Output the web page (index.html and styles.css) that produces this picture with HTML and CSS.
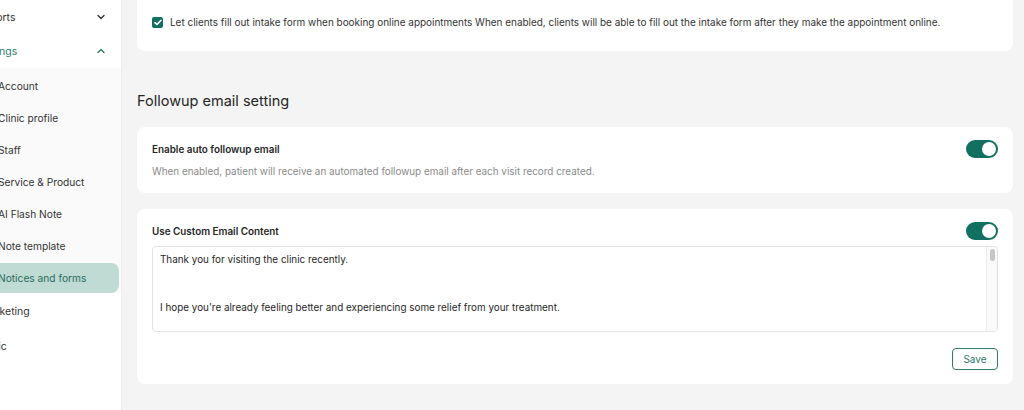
FILE: index.html
```html
<!DOCTYPE html>
<html lang="en">
<head>
    <meta charset="UTF-8">
    <meta name="viewport" content="width=device-width, initial-scale=1.0">
    <title>Notices and forms</title>
    <link rel="stylesheet" href="styles.css">
</head>
<body>
    <aside class="sidebar">
        <nav class="nav">
            <div class="nav-top">
                <span>Reports</span>
                <svg class="chev" width="8" height="6" viewBox="0 0 8 6"><path d="M1 1.5 L4 4.5 L7 1.5" fill="none" stroke="#333" stroke-width="1.4" stroke-linecap="round" stroke-linejoin="round"/></svg>
            </div>
            <div class="nav-top open">
                <span>Settings</span>
                <svg class="chev" width="8" height="6" viewBox="0 0 8 6"><path d="M1 4.5 L4 1.5 L7 4.5" fill="none" stroke="#2f7a69" stroke-width="1.4" stroke-linecap="round" stroke-linejoin="round"/></svg>
            </div>
            <div class="submenu">
                <div class="nav-item">Account</div>
                <div class="nav-item">Clinic profile</div>
                <div class="nav-item">Staff</div>
                <div class="nav-item">Service &amp; Product</div>
                <div class="nav-item">AI Flash Note</div>
                <div class="nav-item">Note template</div>
                <div class="nav-item active">Notices and forms</div>
            </div>
            <div class="nav-top plain"><span>Marketing</span></div>
            <div class="nav-top plain"><span>Basic</span></div>
        </nav>
    </aside>

    <main class="main">
        <section class="card first">
            <label class="check-row">
                <span class="checkbox">
                    <svg width="8" height="7" viewBox="0 0 8 7"><path d="M1 3.6 L3 5.5 L7 1.3" fill="none" stroke="#fff" stroke-width="1.6" stroke-linecap="round" stroke-linejoin="round"/></svg>
                </span>
                <span>Let clients fill out intake form when booking online appointments When enabled, clients will be able to fill out the intake form after they make the appointment online.</span>
            </label>
        </section>

        <h2 class="section-title">Followup email setting</h2>

        <section class="card">
            <div class="row">
                <span class="label">Enable auto followup email</span>
                <span class="toggle"><span class="knob"></span></span>
            </div>
            <p class="hint">When enabled, patient will receive an automated followup email after each visit record created.</p>
        </section>

        <section class="card custom">
            <div class="row">
                <span class="label">Use Custom Email Content</span>
                <span class="toggle"><span class="knob"></span></span>
            </div>
            <div class="textarea">
                <div class="textarea-text">Thank you for visiting the clinic recently.<br><br><br>I hope you're already feeling better and experiencing some relief from your treatment.</div>
                <div class="scrollbar"><span class="thumb"></span></div>
            </div>
            <div class="actions">
                <button class="btn-save">Save</button>
            </div>
        </section>
    </main>
</body>
</html>
```

FILE: styles.css
```css
* {
    box-sizing: border-box;
}
body {
    margin: 0;
    height: 410px;
    overflow: hidden;
    display: flex;
    font-family: Inter, "Noto Sans", sans-serif;
    background-color: #f4f4f4;
    color: #262626;
}
.sidebar {
    width: 122px;
    flex-shrink: 0;
    background: #fff;
    border-right: 1px solid #ededed;
    overflow: hidden;
}
.nav {
    margin-left: -23px;
    width: 145px;
}
.nav-top {
    height: 34px;
    display: flex;
    align-items: center;
    justify-content: space-between;
    padding-right: 17px;
    font-size: 10.5px;
    color: #333;
}
.nav-top.open {
    color: #2f7a69;
}
.nav-top.plain {
    padding-left: 3px;
    height: 35px;
}
.chev {
    display: block;
}
.submenu {
    background: #fafafa;
    padding: 2px 0 0 21px;
}
.nav-item {
    height: 32px;
    display: flex;
    align-items: center;
    font-size: 10.2px;
    color: #333;
}
.nav-item.active {
    margin: 1px 3px 1px -10px;
    height: 30px;
    padding-left: 10px;
    background: #bfdbd4;
    border-radius: 0 8px 8px 0;
    color: #2b6c5d;
}
.main {
    flex: 1;
    padding: 0 11px 0 15px;
}
.card {
    background: #fff;
    border-radius: 8px;
    padding: 13px 15px 14px;
    margin-bottom: 16px;
}
.card.first {
    margin-top: -10px;
    padding: 24px 15px 21px;
    margin-bottom: 0;
}
.check-row {
    display: flex;
    align-items: center;
    gap: 7px;
    height: 16px;
    font-size: 9.95px;
    color: #333;
}
.checkbox {
    width: 11px;
    height: 11px;
    border-radius: 2px;
    background: #11705f;
    display: flex;
    align-items: center;
    justify-content: center;
}
.section-title {
    margin: 39px 0 15px;
    font-size: 14.5px;
    line-height: 22px;
    font-weight: 400;
    color: #262626;
}
.row {
    display: flex;
    align-items: center;
    justify-content: space-between;
    height: 18px;
}
.label {
    font-size: 9.9px;
    font-weight: 600;
    color: #262626;
}
.hint {
    margin: 5px 0 0;
    font-size: 9.9px;
    line-height: 16px;
    color: #8a8a8a;
}
.toggle {
    width: 32px;
    height: 18px;
    border-radius: 9px;
    background: #11705f;
    display: flex;
    align-items: center;
    justify-content: flex-end;
    padding-right: 2px;
}
.knob {
    width: 14px;
    height: 14px;
    border-radius: 50%;
    background: #fff;
}
.textarea {
    margin-top: 6px;
    height: 86px;
    border: 1px solid #e2e2e2;
    border-radius: 4px;
    display: flex;
    overflow: hidden;
}
.textarea-text {
    flex: 1;
    padding: 4px 7px;
    font-size: 9.9px;
    line-height: 16px;
    color: #262626;
}
.scrollbar {
    width: 11px;
    border-left: 1px solid #ececec;
    background: #fafafa;
    padding: 2px 2px 0 3px;
}
.thumb {
    display: block;
    height: 12px;
    border-radius: 3px;
    background: #c6c6c6;
}
.actions {
    display: flex;
    justify-content: flex-end;
    margin-top: 16px;
}
.btn-save {
    height: 22px;
    width: 46px;
    border: 1px solid #2f7a69;
    border-radius: 4px;
    background: #fff;
    color: #2f7a69;
    font-family: inherit;
    font-size: 10px;
    padding: 0;
    cursor: pointer;
}
```
